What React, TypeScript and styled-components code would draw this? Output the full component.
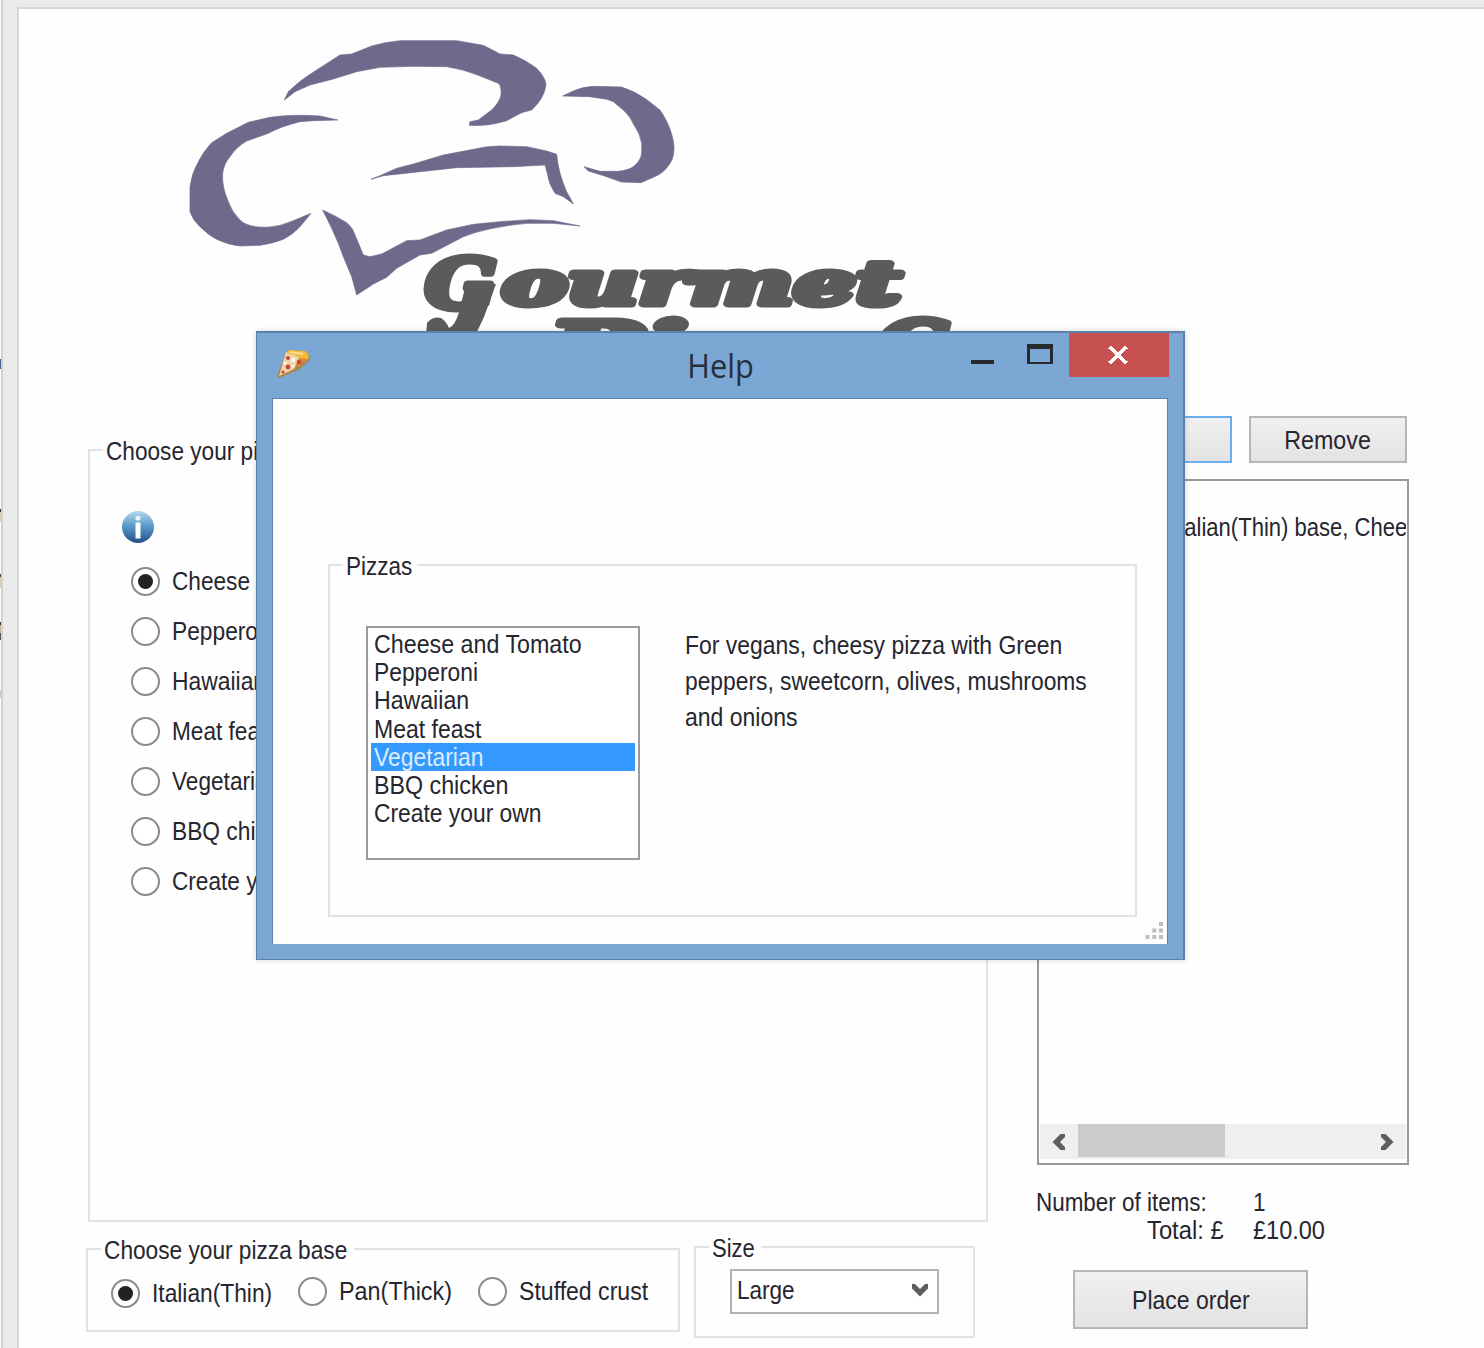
import React from "react";
import styled, { createGlobalStyle, css } from "styled-components";

const GlobalStyle = createGlobalStyle`
  *, *::before, *::after { box-sizing: border-box; }
  body { margin: 0; background: #ebebeb; overflow: hidden; }
  button { font: inherit; color: inherit; padding: 0; margin: 0; }
`;

/* ---------- text ---------- */

const Text = styled.span<{ $sx?: number; $origin?: string }>`
  display: block;
  flex: none;
  white-space: nowrap;
  font-family: "Liberation Sans", Arial, sans-serif;
  font-size: 25px;
  line-height: 28px;
  color: #26262e;
  transform: scaleX(${(p) => p.$sx ?? 0.91});
  transform-origin: ${(p) => p.$origin ?? "left"} center;
`;

/* ---------- frame ---------- */

const Screen = styled.div`
  position: relative;
  display: flex;
  width: 1484px;
  height: 1348px;
  overflow: hidden;
  background: #ebebeb;
`;

const Neighbour = styled.div`
  flex: none;
  width: 3px;
  background: #fdfdfd;
  border-right: 2px solid #d2d2d2;
`;

const Sliver = styled.i<{ $gap: number; $height: number; $tone: string }>`
  display: block;
  width: 1px;
  height: ${(p) => p.$height}px;
  margin-top: ${(p) => p.$gap}px;
  background: ${(p) => p.$tone};
`;

const Page = styled.main`
  display: grid;
  grid-template-columns: 950px 1fr;
  flex: 1;
  margin: 7px 0 0 14px;
  padding-left: 67px;
  background: #fefefe;
  border-left: 2px solid #d6d6d6;
  border-top: 2px solid #d8d8d8;
`;

const Column = styled.div`
  display: flex;
  flex-direction: column;
  align-items: flex-start;
`;

const Logo = styled.svg`
  display: block;
  flex: none;
  width: 900px;
  height: 440px;
`;

/* ---------- controls ---------- */

const GroupFrame = styled.section<{ $width: number; $height: number }>`
  display: flex;
  flex-direction: column;
  align-items: flex-start;
  flex: none;
  width: ${(p) => p.$width}px;
  height: ${(p) => p.$height}px;
  border: 2px solid #e2e2e2;
`;

const Legend = styled.div<{ $width: number }>`
  flex: none;
  height: 28px;
  width: ${(p) => p.$width}px;
  margin: -14px 0 0 13px;
  padding-left: 3px;
  background: #fefefe;
`;

const PizzaGroup = styled(GroupFrame)`
  margin: 0 0 24px 2px;
`;

const Options = styled.div`
  display: flex;
  flex-direction: column;
  gap: 20px;
  margin: 22px 0 0 41px;
`;

const Option = styled.label<{ $width?: number; $drop?: number }>`
  display: flex;
  align-items: center;
  gap: 12px;
  height: 30px;
  width: ${(p) => (p.$width ? `${p.$width}px` : "auto")};
  margin-top: ${(p) => p.$drop ?? 0}px;
`;

const Radio = styled.span<{ $on?: boolean }>`
  display: grid;
  place-items: center;
  flex: none;
  width: 29px;
  height: 29px;
  border-radius: 50%;
  border: 2px solid #8b8b8b;
  background: #fff;
  ${(p) =>
    p.$on &&
    css`
      &::after {
        content: "";
        width: 15px;
        height: 15px;
        border-radius: 50%;
        background: #222;
      }
    `}
`;

const InfoIcon = styled.svg`
  display: block;
  width: 34px;
  height: 34px;
  margin: 45px 0 0 31px;
`;

const BottomRow = styled.div`
  display: flex;
  align-items: flex-start;
  gap: 14px;
`;

const BaseGroup = styled(GroupFrame)`
  margin-top: 2px;
`;

const BaseOptions = styled.div`
  display: flex;
  margin: 12px 0 0 23px;
`;

const Select = styled.div`
  display: flex;
  align-items: center;
  justify-content: space-between;
  width: 209px;
  height: 45px;
  margin: 7px 0 0 34px;
  padding: 0 8px 3px 5px;
  border: 2px solid #b2b3b8;
  background: #fff;
`;

const Arrow = styled.svg`
  flex: none;
  display: block;
`;

const Button = styled.button<{ $width: number; $height: number; $focus?: boolean }>`
  display: flex;
  align-items: center;
  justify-content: center;
  flex: none;
  width: ${(p) => p.$width}px;
  height: ${(p) => p.$height}px;
  border: 2px solid ${(p) => (p.$focus ? "#6aaef0" : "#b6b6b6")};
  background: linear-gradient(#f0f0f0, #e3e3e3);
`;

const Side = styled(Column)`
  padding-top: 407px;
`;

const ButtonRow = styled.div`
  display: flex;
  gap: 17px;
  margin-left: 37px;
`;

const OrderList = styled.div`
  display: flex;
  flex-direction: column;
  justify-content: space-between;
  flex: none;
  width: 372px;
  height: 686px;
  margin: 16px 0 23px 1px;
  padding: 32px 1px 4px;
  border: 2px solid #959aa1;
  background: #fefefe;
  overflow: hidden;
`;

const OrderLine = styled.div`
  overflow: hidden;
  padding-left: 132px;
`;

const ScrollBar = styled.div`
  display: grid;
  grid-template-columns: 38px 147px 1fr 38px;
  align-items: center;
  justify-items: center;
  height: 35px;
  background: #efefef;
`;

const Thumb = styled.div`
  align-self: start;
  width: 147px;
  height: 33px;
  background: #cbcbcb;
`;

const Totals = styled.div`
  display: grid;
  grid-template-columns: 188px auto;
  column-gap: 29px;
  margin-bottom: 26px;
`;

const TotalName = styled.div<{ $start?: boolean }>`
  display: flex;
  justify-content: ${(p) => (p.$start ? "flex-start" : "flex-end")};
`;

const OrderRow = styled.div`
  padding-left: 37px;
`;

/* ---------- help window ---------- */

const HelpWindow = styled.div`
  position: absolute;
  left: 256px;
  top: 331px;
  display: flex;
  flex-direction: column;
  width: 929px;
  height: 629px;
  padding: 0 15px 15px 15px;
  border: 2px solid #5c80a8;
  border-width: 2px 2px 1px 1px;
  background: #7ba7d5;
  box-shadow: 0 0 5px rgba(60, 60, 60, 0.22);
`;

const TitleBar = styled.header`
  display: grid;
  grid-template-columns: 198px 1fr 198px;
  flex: none;
  height: 65px;
  margin-right: -1px;
`;

const PizzaIcon = styled.svg`
  display: block;
  width: 36px;
  height: 32px;
  margin: 15px 0 0 3px;
`;

const Title = styled.h1`
  margin: 9px 0 0;
  font: 400 32px/48px "Open Sans", "Noto Sans", sans-serif;
  color: #25303c;
  text-align: center;
  transform: scaleX(0.96);
`;

const WindowButtons = styled.div`
  display: flex;
  align-items: flex-start;
`;

const CloseButton = styled.div`
  display: grid;
  place-items: center;
  width: 100px;
  height: 44px;
  margin-left: auto;
  padding-right: 2px;
  background: #c75050;
`;

const MinGlyph = styled.span`
  width: 23px;
  height: 4px;
  margin: 27px 33px 0 0;
  background: #262a2e;
`;

const MaxGlyph = styled.span`
  width: 26px;
  height: 20px;
  margin-top: 11px;
  border: 3px solid #262a2e;
  border-top-width: 5px;
  border-bottom-width: 2px;
`;

const Client = styled.div`
  position: relative;
  flex: 1;
  padding: 165px 0 0 55px;
  border: solid #5c83ae;
  border-width: 1px 1px 0 1px;
  background: #fefefe;
`;

const GroupBody = styled.div`
  display: flex;
  margin: 46px 0 0 36px;
`;

const ListBox = styled.ul`
  width: 274px;
  height: 234px;
  margin: 0;
  padding: 2px 3px;
  list-style: none;
  border: 2px solid #979ca2;
  background: #fff;
`;

const ListItem = styled.li<{ $selected?: boolean }>`
  display: flex;
  align-items: center;
  height: 28.2px;
  padding-left: 3px;
  background: ${(p) => (p.$selected ? "#3399ff" : "transparent")};
  ${Text} {
    color: ${(p) => (p.$selected ? "#dcecff" : "#26262e")};
  }
`;

const Description = styled.div`
  display: flex;
  flex-direction: column;
  gap: 8px;
  margin: 5px 0 0 45px;
`;

const Grip = styled.svg`
  position: absolute;
  right: 2px;
  bottom: 3px;
`;

/* ---------- data ---------- */

const pizzas: { name: string; label: number; item: number }[] = [
  { name: "Cheese and Tomato", label: 0.905, item: 0.93 },
  { name: "Pepperoni", label: 0.91, item: 0.912 },
  { name: "Hawaiian", label: 0.915, item: 0.925 },
  { name: "Meat feast", label: 0.905, item: 0.92 },
  { name: "Vegetarian", label: 0.905, item: 0.915 },
  { name: "BBQ chicken", label: 0.91, item: 0.93 },
  { name: "Create your own", label: 0.905, item: 0.913 },
];

const slivers: [number, number, string][] = [
  [359, 10, "#4a5f92"],
  [140, 3, "#333"],
  [0, 10, "#d9cbb0"],
  [52, 3, "#444"],
  [0, 11, "#d9cbb0"],
  [34, 3, "#333"],
  [0, 8, "#cbb894"],
  [0, 7, "#555"],
  [50, 8, "#c9cdb8"],
];

function GourmetLogo() {
  return (
    <Logo viewBox="86 9 900 440">
      <g transform="translate(180 30) scale(0.33333)" fill="#70698c" stroke="#70698c" strokeWidth="2" strokeLinejoin="round">
        <path d="M313 210 L325 185 Q360 150 410 120 L480 75 L515 72 L575 48 Q615 36 660 32 L830 32 L910 46 L960 72 L1000 75 Q1040 92 1070 115 Q1098 145 1098 165 Q1093 205 1055 240 L1025 248 L980 272 Q920 290 868 286 L870 275 L895 270 L935 240 Q960 215 963 195 Q965 170 955 160 L900 138 Q850 117 800 110 L700 109 L600 112 L530 125 L460 147 L390 165 L345 185 Z" />
        <path d="M473 270 L420 258 Q340 252 270 262 L205 277 L140 310 L95 338 Q70 365 55 395 Q35 430 30 470 L30 545 Q38 570 60 590 Q85 615 110 628 Q145 645 180 648 L240 646 Q280 640 310 628 Q340 612 360 590 L393 550 Q365 562 340 572 Q300 590 260 592 Q200 592 180 570 Q155 545 145 515 Q125 470 128 430 Q132 400 150 380 Q170 350 200 333 L265 310 Q300 290 360 275 L400 272 Z" />
        <path d="M573 448 L600 437 L650 415 L700 402 L790 375 L880 358 Q920 348 960 348 L1040 350 L1100 363 L1130 373 Q1135 430 1160 485 L1180 522 L1150 500 L1125 490 Q1105 460 1102 430 L1095 405 L1000 410 L830 413 L740 423 L610 437 Z" />
        <path d="M428 540 L465 558 L500 578 Q520 595 525 615 L550 675 L570 680 L605 672 L680 632 L720 630 L800 600 L880 583 L960 575 L1050 569 L1120 572 L1200 588 L1120 580 L1040 580 Q920 592 850 620 L755 670 L720 675 L650 715 L620 742 L580 762 L530 795 L515 740 L490 680 L475 640 L455 595 Z" />
        <path d="M1148 198 L1180 183 Q1210 170 1240 169 L1324 171 Q1362 182 1399 208 L1440 240 Q1462 272 1471 300 Q1483 335 1482 360 Q1480 390 1465 407 Q1450 430 1420 442 L1383 458 L1324 456 L1271 437 L1225 423 L1212 410 L1260 424 L1314 424 Q1350 420 1362 408 Q1385 390 1385 365 L1385 340 Q1380 310 1362 285 Q1350 258 1330 240 L1300 215 L1281 208 L1228 200 Z" />
      </g>
      <g fontFamily="'DejaVu Serif', serif" fontWeight="700" fontStyle="italic" fill="#5b5b5b" stroke="#5b5b5b" strokeWidth="7" strokeLinejoin="round">
        <text x="425" y="308" fontSize="70" textLength="72" lengthAdjust="spacingAndGlyphs">G</text>
        <text x="502" y="304" fontSize="60" textLength="399" lengthAdjust="spacingAndGlyphs">ourmet</text>
        <text x="548" y="370" fontSize="68" textLength="140" lengthAdjust="spacingAndGlyphs">Pi</text>
        <text x="876" y="370" fontSize="70" textLength="72" lengthAdjust="spacingAndGlyphs">C</text>
      </g>
      <path d="M466 284 L496 284 L484 317 L475 336 L426 336 L427 323 Q433 316 441 318 Q446 321 449 328 Q455 326 459 312 Z" fill="#5b5b5b" />
    </Logo>
  );
}

function Chevron({ turn }: { turn: number }) {
  return (
    <Arrow width="18" height="18" viewBox="0 0 18 18">
      <path d="M1 3 L4 3 L9 8 L14 3 L17 3 L17 7.5 L9 15.5 L1 7.5 Z" fill="#5e5e5e" transform={`rotate(${turn} 9 9)`} />
    </Arrow>
  );
}

export default function App() {
  return (
    <Screen>
      <GlobalStyle />
      <Neighbour>
        {slivers.map(([gap, height, tone], i) => (
          <Sliver key={i} $gap={gap} $height={height} $tone={tone} />
        ))}
      </Neighbour>

      <Page>
        <Column>
          <GourmetLogo />
          <PizzaGroup $width={900} $height={773}>
            <Legend $width={230}>
              <Text $sx={0.905}>Choose your pizza</Text>
            </Legend>
            <InfoIcon viewBox="0 0 34 34">
              <defs>
                <linearGradient id="info" x1="0" y1="0" x2="0" y2="1">
                  <stop offset="0" stopColor="#b5d9ec" />
                  <stop offset="0.45" stopColor="#5b9dcb" />
                  <stop offset="1" stopColor="#234f8e" />
                </linearGradient>
              </defs>
              <circle cx="17" cy="17" r="16" fill="url(#info)" />
              <rect x="14.5" y="6" width="5" height="4.5" rx="1.5" fill="#e8f5fb" />
              <rect x="14.5" y="12.5" width="5" height="16" fill="#fff" />
            </InfoIcon>
            <Options>
              {pizzas.map((p, i) => (
                <Option key={p.name}>
                  <Radio $on={i === 0} />
                  <Text $sx={p.label}>{p.name}</Text>
                </Option>
              ))}
            </Options>
          </PizzaGroup>
          <BottomRow>
            <BaseGroup $width={594} $height={84}>
              <Legend $width={253}>
                <Text $sx={0.907}>Choose your pizza base</Text>
              </Legend>
              <BaseOptions>
                <Option $width={187} $drop={2}>
                  <Radio $on />
                  <Text $sx={0.91}>Italian(Thin)</Text>
                </Option>
                <Option $width={180}>
                  <Radio />
                  <Text $sx={0.935}>Pan(Thick)</Text>
                </Option>
                <Option $width={180}>
                  <Radio />
                  <Text $sx={0.923}>Stuffed crust</Text>
                </Option>
              </BaseOptions>
            </BaseGroup>
            <GroupFrame $width={281} $height={92}>
              <Legend $width={52}>
                <Text $sx={0.88}>Size</Text>
              </Legend>
              <Select>
                <Text $sx={0.9}>Large</Text>
                <Chevron turn={0} />
              </Select>
            </GroupFrame>
          </BottomRow>
        </Column>

        <Side>
          <ButtonRow>
            <Button $width={159} $height={47} $focus />
            <Button $width={158} $height={47}>
              <Text $sx={0.93} $origin="center">Remove</Text>
            </Button>
          </ButtonRow>
          <OrderList>
            <OrderLine>
              <Text $sx={0.882}>Italian(Thin) base, Cheese</Text>
            </OrderLine>
            <ScrollBar>
              <Chevron turn={90} />
              <Thumb />
              <span />
              <Chevron turn={-90} />
            </ScrollBar>
          </OrderList>
          <Totals>
            <TotalName $start>
              <Text $sx={0.897}>Number of items:</Text>
            </TotalName>
            <Text $sx={0.9}>1</Text>
            <TotalName>
              <Text $sx={0.95} $origin="right">Total: £</Text>
            </TotalName>
            <Text $sx={0.94}>£10.00</Text>
          </Totals>
          <OrderRow>
            <Button $width={235} $height={59}>
              <Text $sx={0.92} $origin="center">Place order</Text>
            </Button>
          </OrderRow>
        </Side>
      </Page>

      <HelpWindow>
        <TitleBar>
          <PizzaIcon viewBox="0 0 36 32">
            <path d="M12 2 L30 3 Q36 6 34 13 L24 22 L4 30 Q1 29 3 25 Z" fill="#a98958" />
            <path d="M11 4 L25 8 L19 21 L4 28 Z" fill="#f0d3a8" />
            <path d="M13 2 L30 3 Q35 6 33 11 L27 14 L24 9 L12 5 Z" fill="#f6b93b" />
            <path d="M15 3 L29 5 L27 7 L15 5 Z" fill="#ffe08a" />
            <path d="M27 10 L32 11 L23 19 L21 17 Z" fill="#dd8a2c" />
            <g fill="#c9483c">
              <circle cx="13" cy="10" r="2" />
              <circle cx="13" cy="19" r="2.4" />
              <circle cx="24" cy="14" r="2.3" />
              <circle cx="8" cy="24" r="1.6" />
            </g>
            <g fill="#fff6e2">
              <circle cx="18" cy="12" r="2.4" />
              <circle cx="10" cy="15" r="1.8" />
              <circle cx="18" cy="18" r="1.6" />
            </g>
          </PizzaIcon>
          <Title>Help</Title>
          <WindowButtons>
            <MinGlyph />
            <MaxGlyph />
            <CloseButton>
              <svg width="20" height="18" viewBox="0 0 20 18" shapeRendering="crispEdges">
                <path d="M1.5 1 L18.5 17 M18.5 1 L1.5 17" stroke="#fff" strokeWidth="3.6" />
              </svg>
            </CloseButton>
          </WindowButtons>
        </TitleBar>
        <Client>
          <GroupFrame $width={809} $height={353}>
            <Legend $width={74}>
              <Text $sx={0.9}>Pizzas</Text>
            </Legend>
            <GroupBody>
              <ListBox>
                {pizzas.map((p) => (
                  <ListItem key={p.name} $selected={p.name === "Vegetarian"}>
                    <Text $sx={p.item}>{p.name}</Text>
                  </ListItem>
                ))}
              </ListBox>
              <Description>
                <Text $sx={0.917}>For vegans, cheesy pizza with Green</Text>
                <Text $sx={0.912}>peppers, sweetcorn, olives, mushrooms</Text>
                <Text $sx={0.92}>and onions</Text>
              </Description>
            </GroupBody>
          </GroupFrame>
          <Grip width="20" height="20" viewBox="0 0 20 20" fill="#bdbdbd">
            <rect x="14" y="1" width="4" height="4" />
            <rect x="7.3" y="7.5" width="4" height="4" />
            <rect x="14" y="7.5" width="4" height="4" />
            <rect x="0.5" y="14" width="4" height="4" />
            <rect x="7.3" y="14" width="4" height="4" />
            <rect x="14" y="14" width="4" height="4" />
          </Grip>
        </Client>
      </HelpWindow>
    </Screen>
  );
}
